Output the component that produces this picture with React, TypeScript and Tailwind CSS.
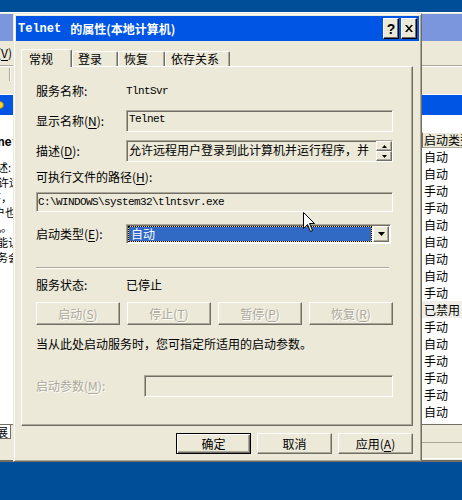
import React from 'react'

const RAISED =
  'border border-t-white border-l-white border-r-[#716f64] border-b-[#716f64] shadow-[inset_-1px_-1px_0_#aca899]'
const SUNKEN =
  'border border-t-[#aca899] border-l-[#aca899] border-r-white border-b-white shadow-[inset_1px_1px_0_#716f64]'
const MONO = "font-['Liberation_Mono',monospace] text-[11px] tracking-[-0.6px]"
const DIM = 'text-[#aca899] [text-shadow:1px_1px_0_#fff]'

const STARTUP = [
  '自动', '自动', '手动', '手动', '自动', '自动', '自动', '自动',
  '手动', '已禁用', '手动', '自动', '手动', '手动', '手动', '自动',
]

function Key({ text, k, colon }: { text: string; k: string; colon?: boolean }) {
  return (
    <>
      {text}(<span className="underline underline-offset-[2px]">{k}</span>){colon ? ':' : null}
    </>
  )
}

function Triangle({ up, size = 7 }: { up?: boolean; size?: number }) {
  const h = Math.ceil(size / 2)
  return (
    <svg width={size} height={h} viewBox={`0 0 ${size} ${h}`}>
      <polygon
        points={up ? `0,${h} ${size},${h} ${size / 2},0` : `0,0 ${size},0 ${size / 2},${h}`}
        fill="#000"
      />
    </svg>
  )
}

// the services console that sits behind the dialog; only its edges show
function ServicesWindow() {
  return (
    <div className="absolute left-[-100px] top-[12px] w-[600px] h-[450px] bg-[#ece9d8] border-t border-t-white border-b-2 border-b-[#716f64] pb-[1px] flex flex-col">
      <div className="mt-[1px] h-[27px] shrink-0 bg-[#7b96dd]" />
      <div className="h-[25px] shrink-0 flex items-center border-b border-b-[#aca899]">
        <span className="ml-[73px]">
          <Key text="查看" k="V" />
        </span>
      </div>
      <div className="h-[28px] shrink-0 border-t border-t-white">
        <div className="ml-[109px] mt-[1px] w-[2px] h-[13px] border-l border-l-[#aca899] border-r border-r-white" />
      </div>

      <div className="flex-1 min-h-0 flex flex-col bg-white">
        <div className="h-[21px] shrink-0 border-t border-t-white bg-[#0055e5] flex items-center">
          <div className="ml-[96px] w-[8px] h-[8px] rounded-full bg-[#f5d33a] border border-[#9a7a10]" />
        </div>

        <div className="flex-1 min-h-0 flex">
          <div className="w-[113px] shrink-0 overflow-hidden flex flex-col items-end text-[11px] leading-[15px] whitespace-nowrap">
            <div className="mt-[21px] mr-[-6px] leading-[14px] font-bold font-['Liberation_Mono',monospace] text-[12px]">Telnet</div>
            <div className="mt-[10px] mr-[2px]">描述:</div>
            <div className="mr-[-7px]">允许远</div>
            <div className="mr-[1px]">运行程序，</div>
            <div className="mr-[-3px]">客户也</div>
            <div className="mr-[1px]">计算机。</div>
            <div className="mr-[-6px]">功能认</div>
            <div className="mr-[-6px]">服务会</div>
          </div>

          <div className="flex-1 flex flex-col">
            <div className="mt-[17px] h-[16px] flex">
              <div className="w-[409px]" />
              <div className="flex-1 bg-[#ece9d8] border-t border-t-white border-b border-b-[#aca899] border-l border-l-[#716f64] pl-[1px] flex items-center">
                启动类型
              </div>
            </div>
            {STARTUP.map((s, i) => (
              <div key={i} className="h-[17px] flex">
                <div className="w-[409px]" />
                <div className={`flex-1 pl-[2px] flex items-center ${s === '已禁用' ? 'bg-[#efeee8]' : ''}`}>{s}</div>
              </div>
            ))}
          </div>
        </div>

        <div className="h-[17px] shrink-0 bg-[#ece9d8] border-t border-t-[#716f64]">
          <div className="ml-[80px] w-[31px] h-[14px] bg-white border-r border-r-[#716f64] border-b border-b-[#716f64] flex items-center pl-[4px]">
            扩展
          </div>
        </div>
        <div className="h-[18px] shrink-0 bg-[#ece9d8] flex gap-[3px] pt-[1px]">
          <div className={`ml-[400px] w-[141px] ${SUNKEN} shadow-none`} />
          <div className={`w-[100px] ${SUNKEN} shadow-none`} />
        </div>
      </div>
    </div>
  )
}

function PushButton({ children, dim, isDefault }: { children: React.ReactNode; dim?: boolean; isDefault?: boolean }) {
  const frame = isDefault
    ? 'border border-black shadow-[inset_1px_1px_0_#fff,inset_-1px_-1px_0_#716f64,inset_-2px_-2px_0_#aca899]'
    : RAISED
  return (
    <div className={`h-full bg-[#ece9d8] flex items-center justify-center ${frame} ${dim ? DIM : ''}`}>
      {children}
    </div>
  )
}

function PropertiesDialog() {
  return (
    <div className="absolute left-[13px] top-[13px] w-[409px] h-[449px] bg-[#ece9d8] border border-t-[#ece9d8] border-l-[#ece9d8] border-r-[#716f64] border-b-[#716f64] shadow-[inset_1px_1px_0_#fff,inset_-1px_-1px_0_#aca899] p-[2px] flex flex-col">
      <div className="h-[25px] shrink-0 bg-[#0055e5] flex items-center pl-[2px] pr-[2px]">
        <div className="flex-1 flex items-center text-white font-bold whitespace-nowrap">
          <span className="font-['Liberation_Mono',monospace] text-[12px]">Telnet</span>
          <span className="ml-[9px] text-[12px]">的属性(本地计算机)</span>
        </div>
        <div className="flex gap-[2px]">
          <div className="w-[16px] h-[21px] bg-[#ece9d8] border border-t-white border-l-white border-r-black border-b-black shadow-[inset_-1px_-1px_0_#716f64] flex items-center justify-center text-[14px] font-bold font-['Liberation_Sans',sans-serif]">
            ?
          </div>
          <div className="w-[16px] h-[21px] bg-[#ece9d8] border border-t-white border-l-white border-r-black border-b-black shadow-[inset_-1px_-1px_0_#716f64] flex items-center justify-center">
            <svg width="8" height="7" viewBox="0 0 8 7">
              <path d="M0 0h2l2 2.5L6 0h2L5 3.5 8 7H6L4 4.5 2 7H0l3-3.5z" fill="#000" />
            </svg>
          </div>
        </div>
      </div>

      {/* tabs */}
      <div className="mt-[8px] ml-[5px] h-[17px] shrink-0 flex items-end relative z-10">
        <div className="w-[51px] h-[18px] -mb-[1px] bg-[#ece9d8] rounded-t-[2px] border-t border-l border-t-white border-l-white border-r border-r-[#716f64] shadow-[inset_-1px_0_0_#aca899] flex items-center pl-[7px]">
          常规
        </div>
        {[
          ['登录', 'w-[46px]'],
          ['恢复', 'w-[47px]'],
          ['依存关系', 'w-[65px]'],
        ].map(([t, w]) => (
          <div
            key={t}
            className={`${w} h-[15px] rounded-t-[2px] border-t border-l border-t-white border-l-white border-r border-r-[#716f64] shadow-[inset_-1px_0_0_#aca899] flex items-center pl-[5px]`}
          >
            {t}
          </div>
        ))}
      </div>

      {/* page */}
      <div className={`ml-[5px] mr-[6px] h-[360px] shrink-0 flex flex-col pl-[14px] pr-[19px] ${RAISED}`}>
        <div className="mt-[15px] h-[18px] flex items-center">
          <div className="w-[90px]">服务名称:</div>
          <div className={MONO}>TlntSvr</div>
        </div>

        <div className="mt-[10px] h-[22px] flex items-center">
          <div className="w-[90px]">
            <Key text="显示名称" k="N" colon />
          </div>
          <div className={`flex-1 h-full ${SUNKEN} pl-[2px] pt-[1px] ${MONO}`}>Telnet</div>
        </div>

        <div className="mt-[8px] h-[22px] flex items-center">
          <div className="w-[90px]">
            <Key text="描述" k="D" colon />
          </div>
          <div className={`flex-1 h-full ${SUNKEN} flex pl-[2px]`}>
            <div className="flex-1 leading-[18px] whitespace-nowrap overflow-hidden">允许远程用户登录到此计算机并运行程序，并</div>
            <div className="w-[16px] flex flex-col">
              <div className={`h-[10px] bg-[#ece9d8] ${RAISED} flex items-center justify-center`}>
                <Triangle up size={5} />
              </div>
              <div className={`h-[10px] bg-[#ece9d8] ${RAISED} flex items-center justify-center`}>
                <Triangle size={5} />
              </div>
            </div>
          </div>
        </div>

        <div className="mt-[6px] h-[18px] flex items-center">
          <Key text="可执行文件的路径" k="H" colon />
        </div>

        <div className={`mt-[6px] h-[20px] ${SUNKEN} flex items-center pl-[1px] ${MONO}`}>
          C:\WINDOWS\system32\tlntsvr.exe
        </div>

        <div className="mt-[12px] h-[20px] flex items-center">
          <div className="w-[90px]">
            <Key text="启动类型" k="E" colon />
          </div>
          <div className={`w-[265px] h-full ${SUNKEN} bg-white p-[1px] flex`}>
            <div className="flex-1 mr-[1px] border border-dotted border-black bg-[#ffd35a]">
              <div className="h-full bg-[#316ac5] text-white flex items-center pl-[2px]">自动</div>
            </div>
            <div className={`w-[16px] bg-[#ece9d8] ${RAISED} flex items-center justify-center`}>
              <Triangle />
            </div>
          </div>
        </div>

        <div className="mt-[23px] mr-[4px] h-[2px] border-t border-t-[#aca899] border-b border-b-white" />

        <div className="mt-[7px] h-[18px] flex items-center">
          <div className="w-[90px]">服务状态:</div>
          <div>已停止</div>
        </div>

        <div className="mt-[8px] h-[23px] grid grid-cols-4 gap-[7px]">
          <PushButton dim><Key text="启动" k="S" /></PushButton>
          <PushButton dim><Key text="停止" k="T" /></PushButton>
          <PushButton dim><Key text="暂停" k="P" /></PushButton>
          <PushButton dim><Key text="恢复" k="R" /></PushButton>
        </div>

        <div className="mt-[10px] h-[18px] flex items-center">当从此处启动服务时，您可指定所适用的启动参数。</div>

        <div className="mt-[22px] h-[22px] flex items-center">
          <div className={`w-[108px] ${DIM}`}>
            <Key text="启动参数" k="M" colon />
          </div>
          <div className={`flex-1 h-full ${SUNKEN}`} />
        </div>
      </div>

      <div className="mt-[7px] mr-[6px] h-[21px] flex justify-end gap-[6px]">
        <div className="w-[75px]"><PushButton isDefault>确定</PushButton></div>
        <div className="w-[75px]"><PushButton>取消</PushButton></div>
        <div className="w-[75px]"><PushButton><Key text="应用" k="A" /></PushButton></div>
      </div>
    </div>
  )
}

export default function App() {
  return (
    <div className="relative w-[462px] h-[500px] overflow-hidden bg-[#004e98] text-black text-[12px] leading-[14px] font-['Noto_Sans_CJK_SC',sans-serif]">
      <ServicesWindow />
      <PropertiesDialog />
      <svg className="absolute left-[303px] top-[212px]" width="13" height="21" viewBox="0 0 13 21">
        <path d="M0.5 0.5V16.5L4.5 12.5L7.5 19.5L9.5 18.5L6.5 11.5H11.5Z" fill="#fff" stroke="#000" />
      </svg>
    </div>
  )
}
